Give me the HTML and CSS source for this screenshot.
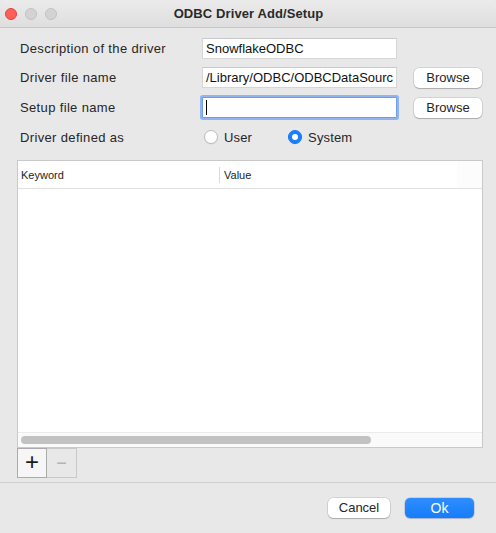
FILE: index.html
```html
<!DOCTYPE html>
<html>
<head>
<meta charset="utf-8">
<title>ODBC Driver Add/Setup</title>
<link rel="stylesheet" href="styles.css">
</head>
<body>
<div class="window">
  <div class="titlebar">
    <div class="lights">
      <span class="light red"></span>
      <span class="light gray"></span>
      <span class="light gray"></span>
    </div>
    <div class="title">ODBC Driver Add/Setup</div>
  </div>

  <div class="form">
    <div class="row r1">
      <div class="label">Description of the driver</div>
      <div class="field">SnowflakeODBC</div>
    </div>
    <div class="row r2">
      <div class="label">Driver file name</div>
      <div class="field">/Library/ODBC/ODBCDataSourc</div>
      <button class="btn browse">Browse</button>
    </div>
    <div class="row r3">
      <div class="label">Setup file name</div>
      <div class="field focused"><span class="caret"></span></div>
      <button class="btn browse">Browse</button>
    </div>
    <div class="row r4">
      <div class="label">Driver defined as</div>
      <div class="radios">
        <label class="radio"><span class="dot"></span>User</label>
        <label class="radio checked"><span class="dot"></span>System</label>
      </div>
    </div>
  </div>

  <div class="table">
    <div class="thead">
      <div class="th c1">Keyword</div>
      <div class="th c2">Value</div>
      <div class="th c3"></div>
    </div>
    <div class="tbody"></div>
    <div class="hscroll"><div class="thumb"></div></div>
  </div>

  <div class="tools">
    <button class="tool add">+</button>
    <button class="tool remove">&minus;</button>
  </div>

  <div class="separator"></div>

  <div class="footer">
    <button class="btn cancel">Cancel</button>
    <button class="btn ok">Ok</button>
  </div>
</div>
</body>
</html>
```

FILE: styles.css
```css
* { box-sizing: border-box; }
html, body {
  margin: 0;
  padding: 0;
  background: #e8e8e8;
}
body {
  font-family: "Liberation Sans", Arial, sans-serif;
  font-size: 13px;
  color: #242424;
}
.window {
  width: 496px;
  height: 533px;
  background: #e8e8e8;
  display: flex;
  flex-direction: column;
}
.titlebar {
  height: 28px;
  flex: none;
  display: flex;
  align-items: center;
  justify-content: center;
  position: relative;
  background: linear-gradient(#ebebeb, #dedede);
  border-bottom: 1px solid #c6c6c6;
  border-radius: 5px 5px 0 0;
}
.lights {
  position: absolute;
  left: 5px;
  top: 8px;
  display: flex;
  gap: 8px;
}
.light {
  width: 12px;
  height: 12px;
  border-radius: 50%;
  display: block;
}
.light.red {
  background: #fe5f57;
  border: 1px solid #e0443e;
}
.light.gray {
  background: #d3d3d3;
  border: 1px solid #c2c2c2;
}
.title {
  font-weight: bold;
  font-size: 13px;
  color: #2a2a2a;
  padding-left: 1px;
  letter-spacing: 0.1px;
}
.form {
  padding-left: 20px;
  display: flex;
  flex-direction: column;
}
.row {
  display: flex;
  align-items: center;
}
.r1 { margin-top: 10px; height: 21px; }
.r2 { margin-top: 8px; height: 21px; }
.r3 { margin-top: 9px; height: 21px; }
.r4 { margin-top: 10px; height: 18px; }
.label {
  width: 182px;
  flex: none;
  color: #262626;
  letter-spacing: 0.35px;
}
.field {
  width: 195px;
  height: 21px;
  flex: none;
  background: #fff;
  border: 1px solid #d6d6d6;
  border-top-color: #c9c9c9;
  padding: 0 3px;
  line-height: 19px;
  color: #111;
  white-space: nowrap;
  overflow: hidden;
  display: flex;
  align-items: center;
}
.field.focused {
  border: 1px solid #6f9de6;
  box-shadow: 0 0 0 2px #8fb4ef;
  border-radius: 1px;
}
.caret {
  display: block;
  width: 1px;
  height: 15px;
  background: #000;
}
.btn {
  font-family: "Liberation Sans", Arial, sans-serif;
  font-size: 13px;
  color: #262626;
  background: #fff;
  border: none;
  border-radius: 5px;
  box-shadow: 0 0 0 0.5px rgba(0,0,0,0.18), 0 1px 1px rgba(0,0,0,0.18);
  padding: 0;
  height: 20px;
  line-height: 20px;
  text-align: center;
}
.browse {
  width: 68px;
  margin-left: 17px;
  align-self: flex-end;
}
.radios {
  display: flex;
  align-items: center;
  margin-left: 2px;
  gap: 36px;
}
.radio {
  display: flex;
  align-items: center;
  gap: 6px;
  color: #262626;
  letter-spacing: 0.15px;
}
.dot {
  width: 14px;
  height: 14px;
  border-radius: 50%;
  background: #fff;
  border: 1px solid #bdbdbd;
  box-shadow: 0 0.5px 1px rgba(0,0,0,0.08);
  display: block;
  position: relative;
}
.radio.checked .dot {
  background: #1a80fb;
  border-color: #1777f0;
}
.radio.checked .dot::after {
  content: "";
  position: absolute;
  left: 3px;
  top: 3px;
  width: 6px;
  height: 6px;
  border-radius: 50%;
  background: #fff;
}
.table {
  margin-top: 14px;
  margin-left: 17px;
  width: 466px;
  height: 288px;
  flex: none;
  border: 1px solid #c9c9c9;
  background: #fff;
  display: flex;
  flex-direction: column;
}
.thead {
  height: 28px;
  flex: none;
  display: flex;
  align-items: center;
  border-bottom: 1px solid #e0e0e0;
  font-size: 11px;
  color: #1e1e1e;
}
.th {
  height: 100%;
  display: flex;
  align-items: center;
}
.th.c1 {
  width: 202px;
  padding-left: 3px;
  position: relative;
}
.th.c1::after {
  content: "";
  position: absolute;
  right: 0;
  top: 6px;
  width: 1px;
  height: 16px;
  background: #dadada;
}
.th.c2 {
  flex: 1;
  padding-left: 4px;
}
.th.c3 {
  width: 25px;
  background: #fcfcfc;
}
.tbody {
  flex: 1;
  background: #fff;
}
.hscroll {
  height: 15px;
  flex: none;
  background: #fafafa;
  border-top: 1px solid #ebebeb;
  padding: 3px 0 0 3px;
}
.thumb {
  width: 350px;
  height: 8px;
  border-radius: 4px;
  background: #c2c2c2;
}
.tools {
  margin-left: 17px;
  display: flex;
  flex: none;
}
.tool {
  width: 30px;
  height: 30px;
  padding: 0;
  margin: 0;
  font-family: "Liberation Sans", Arial, sans-serif;
  display: flex;
  align-items: center;
  justify-content: center;
}
.tool.add {
  background: #f6f6f6;
  border: 1px solid #ababab;
  font-size: 24px;
  color: #1c1c1c;
  line-height: 1;
  padding-bottom: 2px;
}
.tool.remove {
  background: #e8e8e8;
  border: 1px solid #c9c9c9;
  border-left: none;
  font-size: 18px;
  color: #b4b4b4;
}
.separator {
  margin-top: 4px;
  height: 1px;
  flex: none;
  background: #cfcfcf;
}
.footer {
  display: flex;
  justify-content: flex-end;
  gap: 15px;
  padding: 15px 22px 0 0;
}
.cancel {
  width: 62px;
}
.ok {
  width: 69px;
  height: 20px;
  color: #fff;
  background: linear-gradient(#2f8dfd, #157dfb);
  box-shadow: 0 0 0 0.5px rgba(0,80,200,0.3), 0 1px 1px rgba(0,0,0,0.15);
  font-size: 14px;
  line-height: 19px;
}
```
